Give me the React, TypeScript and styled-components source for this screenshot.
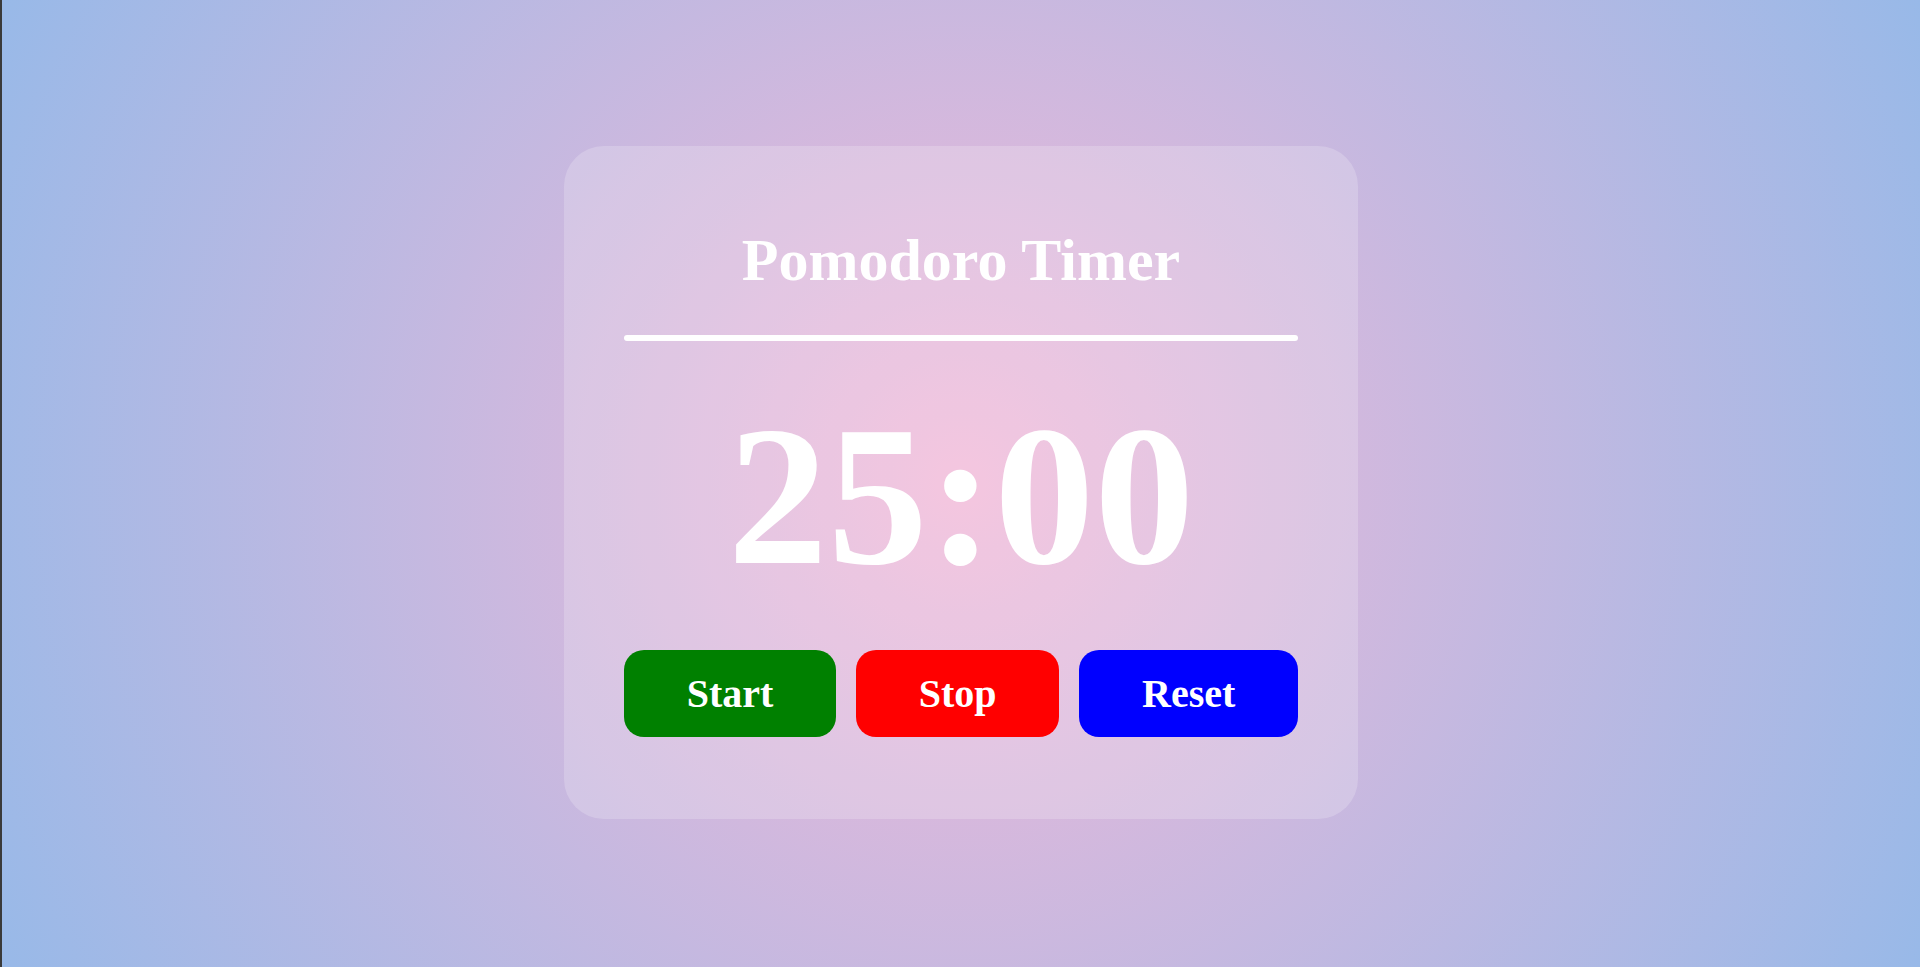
import React from "react";
import styled, { createGlobalStyle } from "styled-components";

const GlobalStyle = createGlobalStyle`
  html, body {
    margin: 0;
    padding: 0;
    height: 100%;
  }
  body {
    font-family: "Liberation Serif", "Times New Roman", serif;
    background: #3a3a3a;
  }
  #root {
    height: 100%;
  }
`;

const Page = styled.div`
  box-sizing: border-box;
  height: 100vh;
  margin-left: 2px;
  padding-bottom: 3px;
  display: flex;
  align-items: center;
  justify-content: center;
  background: radial-gradient(circle at center, #f2b8d8 0%, #98b9e8 100%);
`;

const Card = styled.div`
  box-sizing: border-box;
  width: 794px;
  padding: 40px 60px 42px;
  border-radius: 40px;
  background: rgba(255, 255, 255, 0.2);
  display: flex;
  flex-direction: column;
  align-items: stretch;
`;

const Title = styled.h1`
  margin: 40px 0;
  font-size: 60px;
  font-weight: bold;
  color: #ffffff;
  text-align: center;
  line-height: normal;
`;

const Divider = styled.div`
  height: 6px;
  border-radius: 3px;
  background: #ffffff;
`;

const Clock = styled.div`
  margin: 40px 0;
  font-size: 200px;
  font-weight: bold;
  color: #ffffff;
  text-align: center;
  line-height: normal;
`;

const Controls = styled.div`
  display: flex;
  gap: 20px;
  margin-bottom: 40px;
`;

const ControlButton = styled.button<{ $bg: string }>`
  flex: 1 1 auto;
  padding: 20px;
  border: none;
  border-radius: 20px;
  background: ${(p) => p.$bg};
  color: #ffffff;
  font-family: "Liberation Serif", "Times New Roman", serif;
  font-size: 40px;
  font-weight: bold;
  line-height: normal;
  cursor: pointer;
`;

export default function App() {
  return (
    <>
      <GlobalStyle />
      <Page>
        <Card>
          <Title>Pomodoro Timer</Title>
          <Divider />
          <Clock>25:00</Clock>
          <Controls>
            <ControlButton $bg="#008000">Start</ControlButton>
            <ControlButton $bg="#ff0000">Stop</ControlButton>
            <ControlButton $bg="#0000ff">Reset</ControlButton>
          </Controls>
        </Card>
      </Page>
    </>
  );
}
